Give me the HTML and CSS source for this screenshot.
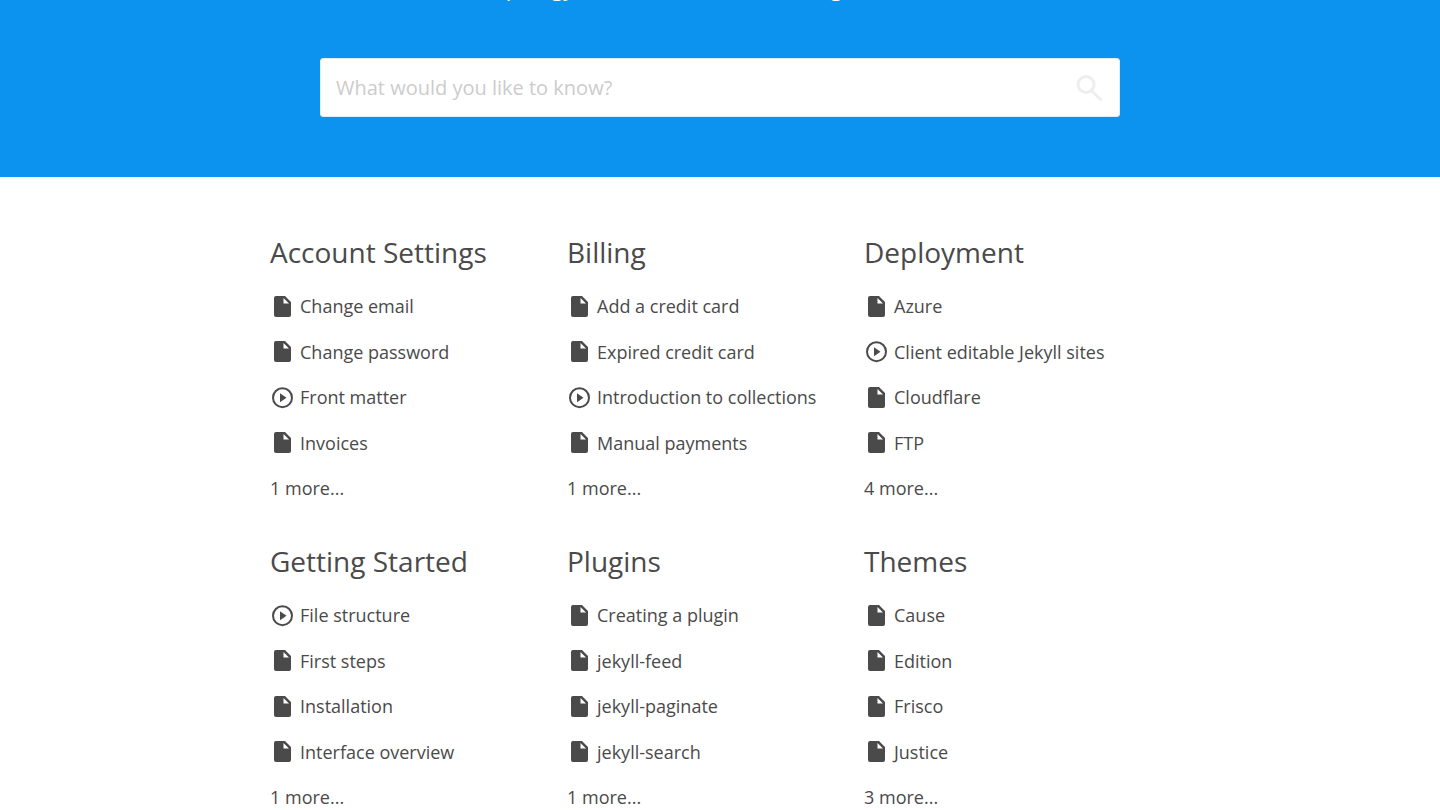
FILE: index.html
```
<!DOCTYPE html>
<html lang="en">
<head>
<meta charset="utf-8">
<meta name="viewport" content="width=device-width, initial-scale=1">
<title>Knowledge base</title>
<link rel="stylesheet" href="styles.css">
</head>
<body>
<svg class="sprite" aria-hidden="true">
  <symbol id="doc" viewBox="0 0 24 24"><path d="M6 1H15L21 7V20a2 2 0 0 1-2 2H6a2 2 0 0 1-2-2V3a2 2 0 0 1 2-2zM13.500 3V8.500h5.500z" fill-rule="evenodd"/></symbol>
  <symbol id="play" viewBox="0 0 24 24"><circle cx="12.500" cy="11.700" r="9.500" fill="none" stroke="currentColor" stroke-width="2"/><path d="M10 7.200v9l6.500-4.500z"/></symbol>
</svg>
<header class="hero">
  <p class="tagline">Topology tutorials and docs for beginners here</p>
  <form class="search" role="search">
    <input class="search-input" type="search" aria-label="Search" placeholder="What would you like to know?">
    <button class="search-button" type="submit" aria-label="Search">
      <svg class="search-icon" viewBox="0 0 28 28"><circle cx="10" cy="10.500" r="8" /><path d="M16 17L25.500 26.500"/></svg>
    </button>
  </form>
</header>
<main class="topics">
  <section class="topic">
    <h2 class="topic-title">Account Settings</h2>
    <ul class="links">
      <li><a href="#"><svg class="icon"><use href="#doc"/></svg>Change email</a></li>
      <li><a href="#"><svg class="icon"><use href="#doc"/></svg>Change password</a></li>
      <li><a href="#"><svg class="icon"><use href="#play"/></svg>Front matter</a></li>
      <li><a href="#"><svg class="icon"><use href="#doc"/></svg>Invoices</a></li>
      <li><a href="#">1 more...</a></li>
    </ul>
  </section>
  <section class="topic">
    <h2 class="topic-title">Billing</h2>
    <ul class="links">
      <li><a href="#"><svg class="icon"><use href="#doc"/></svg>Add a credit card</a></li>
      <li><a href="#"><svg class="icon"><use href="#doc"/></svg>Expired credit card</a></li>
      <li><a href="#"><svg class="icon"><use href="#play"/></svg>Introduction to collections</a></li>
      <li><a href="#"><svg class="icon"><use href="#doc"/></svg>Manual payments</a></li>
      <li><a href="#">1 more...</a></li>
    </ul>
  </section>
  <section class="topic">
    <h2 class="topic-title">Deployment</h2>
    <ul class="links">
      <li><a href="#"><svg class="icon"><use href="#doc"/></svg>Azure</a></li>
      <li><a href="#"><svg class="icon"><use href="#play"/></svg>Client editable Jekyll sites</a></li>
      <li><a href="#"><svg class="icon"><use href="#doc"/></svg>Cloudflare</a></li>
      <li><a href="#"><svg class="icon"><use href="#doc"/></svg>FTP</a></li>
      <li><a href="#">4 more...</a></li>
    </ul>
  </section>
  <section class="topic">
    <h2 class="topic-title">Getting Started</h2>
    <ul class="links">
      <li><a href="#"><svg class="icon"><use href="#play"/></svg>File structure</a></li>
      <li><a href="#"><svg class="icon"><use href="#doc"/></svg>First steps</a></li>
      <li><a href="#"><svg class="icon"><use href="#doc"/></svg>Installation</a></li>
      <li><a href="#"><svg class="icon"><use href="#doc"/></svg>Interface overview</a></li>
      <li><a href="#">1 more...</a></li>
    </ul>
  </section>
  <section class="topic">
    <h2 class="topic-title">Plugins</h2>
    <ul class="links">
      <li><a href="#"><svg class="icon"><use href="#doc"/></svg>Creating a plugin</a></li>
      <li><a href="#"><svg class="icon"><use href="#doc"/></svg>jekyll-feed</a></li>
      <li><a href="#"><svg class="icon"><use href="#doc"/></svg>jekyll-paginate</a></li>
      <li><a href="#"><svg class="icon"><use href="#doc"/></svg>jekyll-search</a></li>
      <li><a href="#">1 more...</a></li>
    </ul>
  </section>
  <section class="topic">
    <h2 class="topic-title">Themes</h2>
    <ul class="links">
      <li><a href="#"><svg class="icon"><use href="#doc"/></svg>Cause</a></li>
      <li><a href="#"><svg class="icon"><use href="#doc"/></svg>Edition</a></li>
      <li><a href="#"><svg class="icon"><use href="#doc"/></svg>Frisco</a></li>
      <li><a href="#"><svg class="icon"><use href="#doc"/></svg>Justice</a></li>
      <li><a href="#">3 more...</a></li>
    </ul>
  </section>
</main>
</body>
</html>
```

FILE: styles.css
```
* { box-sizing: border-box; }
html { overflow: hidden; }
body {
  margin: 0;
  background: #fff;
  color: #4a4a4a;
  font-family: "Open Sans", "Noto Sans", sans-serif;
  font-size: 18px;
  line-height: 25px;
}
.sprite { display: none; }
.hero {
  padding-bottom: 60px;
  background: #0c93f0;
}
.tagline {
  margin: -28px 0 56px;
  color: #fff;
  font-size: 22px;
  line-height: 30px;
  text-align: center;
}
.search {
  display: flex;
  align-items: center;
  max-width: 800px;
  margin: 0 auto;
  padding: 0 15px;
  border: 1px solid #dceefb;
  border-radius: 3px;
  background: #fff;
}
.search-input {
  flex: 1;
  min-width: 0;
  height: 57px;
  padding: 0;
  border: 0;
  outline: 0;
  background: none;
  color: inherit;
  font: inherit;
  font-size: 20px;
}
.search-input::placeholder { color: #ccc; opacity: 1; }
.search-button {
  display: flex;
  padding: 0;
  border: 0;
  background: none;
}
.search-icon {
  width: 28px;
  height: 28px;
  fill: none;
  stroke: #eee;
  stroke-width: 3;
}
.topics {
  display: grid;
  grid-template-columns: repeat(3, 1fr);
  gap: 40px 0;
  max-width: 900px;
  margin: 0 auto;
  padding: 55px 9px 0 0;
}
.topic-title {
  margin: 0 0 22px;
  font-size: 28px;
  font-weight: 400;
  line-height: 40px;
}
.links {
  display: flex;
  flex-direction: column;
  justify-content: space-between;
  min-height: 207px;
  margin: 0;
  padding: 0;
  list-style: none;
}
.links a {
  display: flex;
  align-items: center;
  gap: 6px;
  color: inherit;
  text-decoration: none;
}
.icon {
  flex: none;
  width: 24px;
  height: 24px;
  fill: currentColor;
}
```
